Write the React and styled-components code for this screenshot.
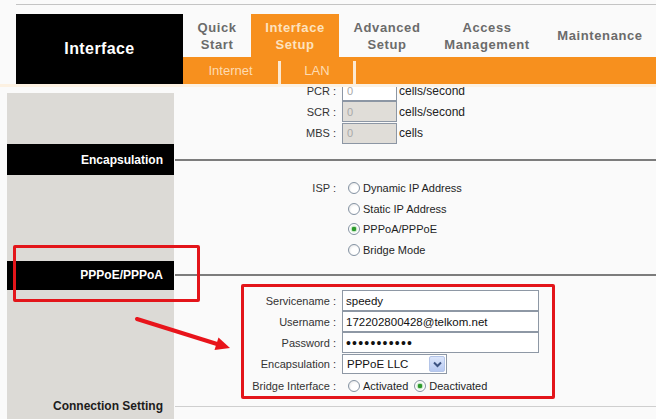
import React from 'react'
import styled, { createGlobalStyle } from 'styled-components'

const GlobalStyle = createGlobalStyle`
  body {
    margin: 0;
    background: #fafafa;
    font-family: 'Liberation Sans', Arial, sans-serif;
  }
`

const tabs = [
  { label: ['Quick', 'Start'], w: 68 },
  { label: ['Interface', 'Setup'], w: 88, active: true },
  { label: ['Advanced', 'Setup'], w: 96 },
  { label: ['Access', 'Management'], w: 104 },
  { label: ['Maintenance'], w: 122 },
]

const App = () => (
  <Page>
    <GlobalStyle />
    <TopRule />
    <Header>
      <Logo>Interface</Logo>
      <Nav>
        <Tabs>
          {tabs.map(t => (
            <Tab key={t.label[0]} $w={t.w} $active={t.active}>
              {t.label.map(l => <span key={l}>{l}</span>)}
            </Tab>
          ))}
        </Tabs>
        <SubBar>
          <SubItem $w={95}>Internet</SubItem>
          <SubSep />
          <SubItem $w={72}>LAN</SubItem>
          <SubSep />
        </SubBar>
      </Nav>
    </Header>

    <Content>
      <Scroll>
        <Band>
          <Side $fadeTop />
          <Body>
            <Field $h={21}>
              <Label>PCR :</Label>
              <RateBox $white value="0" readOnly />
              <Unit>cells/second</Unit>
            </Field>
            <Field $h={21.5}>
              <Label>SCR :</Label>
              <RateBox value="0" readOnly />
              <Unit>cells/second</Unit>
            </Field>
            <Field $h={21.5}>
              <Label>MBS :</Label>
              <RateBox value="0" readOnly />
              <Unit>cells</Unit>
            </Field>
          </Body>
        </Band>

        <Section $h={31}>
          <SectionTitle>Encapsulation</SectionTitle>
          <SectionLine />
        </Section>

        <Band>
          <Side />
          <Body $pad={2.5}>
            <Field $h={20.75}>
              <Label>ISP :</Label>
              <Option><Radio /> Dynamic IP Address</Option>
            </Field>
            <Field $h={20.75}>
              <Label />
              <Option><Radio /> Static IP Address</Option>
            </Field>
            <Field $h={20.75}>
              <Label />
              <Option><Radio $on /> PPPoA/PPPoE</Option>
            </Field>
            <Field $h={20.75}>
              <Label />
              <Option><Radio /> Bridge Mode</Option>
            </Field>
          </Body>
        </Band>

        <Section $h={29.5}>
          <SectionTitle>PPPoE/PPPoA</SectionTitle>
          <SectionLine />
        </Section>

        <Band>
          <Side />
          <Body>
            <Field $h={21}>
              <Label>Servicename :</Label>
              <TextBox value="speedy" readOnly />
            </Field>
            <Field $h={21}>
              <Label>Username :</Label>
              <TextBox value="172202800428@telkom.net" readOnly />
            </Field>
            <Field $h={21}>
              <Label>Password :</Label>
              <TextBox type="password" value="xxxxxxxxxxx" readOnly $secret />
            </Field>
            <Field $h={22}>
              <Label>Encapsulation :</Label>
              <Select>
                PPPoE LLC
                <SelectButton>
                  <svg width="9" height="7" viewBox="0 0 9 7">
                    <path d="M1 1.5 L4.5 5 L8 1.5" fill="none" stroke="#3c5382" strokeWidth="2" />
                  </svg>
                </SelectButton>
              </Select>
            </Field>
            <Field $h={22}>
              <Label>Bridge Interface :</Label>
              <Option><Radio /> Activated</Option>
              <Option><Radio $on /> Deactivated</Option>
            </Field>
          </Body>
        </Band>

        <Section $h={18} $light>
          <SectionTitle $light>Connection Setting</SectionTitle>
          <SectionLine $light />
        </Section>

        <Band>
          <Side />
          <Body $fill />
        </Band>
      </Scroll>
    </Content>

    <Callout $x={13} $y={245} $w={187} $h={57} />
    <Callout $x={241} $y={284} $w={314} $h={115} />
    <Arrow width="110" height="48" viewBox="0 0 110 48">
      <line x1="7" y1="9" x2="87" y2="34" stroke="#e8141b" strokeWidth="4" strokeLinecap="round" />
      <polygon points="100,38 84.5,40 88.5,27.5" fill="#e8141b" />
    </Arrow>
  </Page>
)

const Page = styled.div`
  position: relative;
  width: 656px;
  height: 419px;
  overflow: hidden;
  background: #fafafa;
`

const TopRule = styled.div`
  margin: 4px 0 0 16px;
  height: 1px;
  background: #c4c4c4;
`

const Header = styled.header`
  display: flex;
  height: 70px;
  margin: 9px 0 0 16px;
`

const Logo = styled.div`
  width: 167px;
  flex: none;
  display: flex;
  align-items: center;
  justify-content: center;
  background: #000;
  color: #fff;
  font-size: 16px;
  font-weight: bold;
  letter-spacing: 0.4px;
`

const Nav = styled.nav`
  flex: 1;
  display: flex;
  flex-direction: column;
  overflow: hidden;
`

const Tabs = styled.div`
  display: flex;
  height: 43px;
`

const Tab = styled.div`
  flex: none;
  width: ${p => p.$w}px;
  display: flex;
  flex-direction: column;
  align-items: center;
  justify-content: center;
  font-size: 13px;
  font-weight: bold;
  line-height: 17px;
  letter-spacing: 0.6px;
  color: ${p => (p.$active ? '#fde2bf' : '#6b6b6b')};
  background: ${p => (p.$active ? '#f7901e' : 'transparent')};
`

const SubBar = styled.div`
  display: flex;
  height: 27px;
  background: #f7901e;
`

const SubItem = styled.div`
  width: ${p => p.$w}px;
  display: flex;
  align-items: center;
  justify-content: center;
  font-size: 13px;
  color: #fddbb2;
`

const SubSep = styled.div`
  width: 3px;
  margin-top: 4px;
  background: #fce9d1;
`

const Content = styled.main`
  height: 332px;
  border-top: 3px solid #fcf1e2;
  overflow: hidden;
  padding-left: 7px;
`

const Scroll = styled.div`
  margin-top: -7px;
`

const Band = styled.div`
  display: flex;
`

const Side = styled.div`
  width: 167px;
  flex: none;
  background: ${p => (p.$fadeTop ? 'linear-gradient(#fafafa 13px, #dcdad6 13px)' : '#dcdad6')};
`

const Body = styled.div`
  flex: 1;
  display: flex;
  flex-direction: column;
  padding-top: ${p => p.$pad || 0}px;
  height: ${p => (p.$fill ? '40px' : 'auto')};
`

const Field = styled.div`
  display: flex;
  align-items: center;
  height: ${p => p.$h}px;
  font-size: 11px;
  color: #2a2a2a;
`

const Label = styled.div`
  width: 168px;
  flex: none;
  text-align: right;
  padding-right: 6px;
  box-sizing: border-box;
  white-space: nowrap;
  color: #333;
`

const RateBox = styled.input`
  width: 55px;
  height: 21px;
  box-sizing: border-box;
  margin: 0;
  padding: 0 0 0 4px;
  border: 1px solid #8c96a4;
  background: ${p => (p.$white ? '#fff' : '#e0ddd8')};
  color: #a9a9a9;
  font: 11px 'Liberation Sans', Arial, sans-serif;
  outline: none;
`

const Unit = styled.span`
  margin-left: 2px;
  font-size: 12px;
  color: #222;
`

const TextBox = styled.input`
  width: 197px;
  height: 21px;
  box-sizing: border-box;
  margin: 0;
  padding: 0 0 0 3px;
  border: 1px solid #8e98a5;
  background: #fff;
  color: #111;
  font: ${p => (p.$secret ? '14px' : '11.5px')} 'Liberation Sans', Arial, sans-serif;
  letter-spacing: ${p => (p.$secret ? '1.2px' : '0')};
  outline: none;
`

const Select = styled.div`
  width: 105px;
  height: 20px;
  box-sizing: border-box;
  display: flex;
  align-items: center;
  justify-content: space-between;
  padding: 0 1px 0 4px;
  border: 1px solid #8e98a5;
  background: #fff;
  color: #111;
  font-size: 11.5px;
`

const SelectButton = styled.span`
  width: 16px;
  height: 16px;
  box-sizing: border-box;
  display: flex;
  align-items: center;
  justify-content: center;
  border: 1px solid #b4c5e8;
  border-radius: 2px;
  background: linear-gradient(#dce6fb, #b7c9f1);
`

const Option = styled.label`
  display: flex;
  align-items: center;
  gap: 3px;
  margin-left: 6px;
  color: #1e1e1e;
  white-space: nowrap;
`

const Radio = styled.span`
  width: 12px;
  height: 12px;
  flex: none;
  box-sizing: border-box;
  border-radius: 50%;
  border: 1px solid #8593a3;
  background: ${p =>
    p.$on
      ? 'radial-gradient(circle, #2c9a2c 0 2px, #bfe3bf 2.5px, #ffffff 4px)'
      : 'radial-gradient(circle at 60% 60%, #ffffff 40%, #dcdcdc)'};
`

const Section = styled.div`
  display: flex;
  height: ${p => p.$h}px;
`

const SectionTitle = styled.div`
  width: 167px;
  flex: none;
  box-sizing: border-box;
  display: flex;
  align-items: center;
  justify-content: flex-end;
  padding-right: 11px;
  font-size: 12px;
  font-weight: bold;
  background: ${p => (p.$light ? '#dcdad6' : '#000')};
  color: ${p => (p.$light ? '#1c1c1c' : '#fff')};
`

const SectionLine = styled.div`
  flex: 1;
  align-self: center;
  margin-left: 1px;
  height: ${p => (p.$light ? 1 : 2)}px;
  background: ${p => (p.$light ? '#cfcfcf' : '#7c7c7c')};
`

const Callout = styled.div`
  position: absolute;
  left: ${p => p.$x}px;
  top: ${p => p.$y}px;
  width: ${p => p.$w}px;
  height: ${p => p.$h}px;
  box-sizing: border-box;
  border: 3px solid #e3151a;
  border-radius: 2px;
  pointer-events: none;
`

const Arrow = styled.svg`
  position: absolute;
  left: 130px;
  top: 310px;
  pointer-events: none;
`

export default App
